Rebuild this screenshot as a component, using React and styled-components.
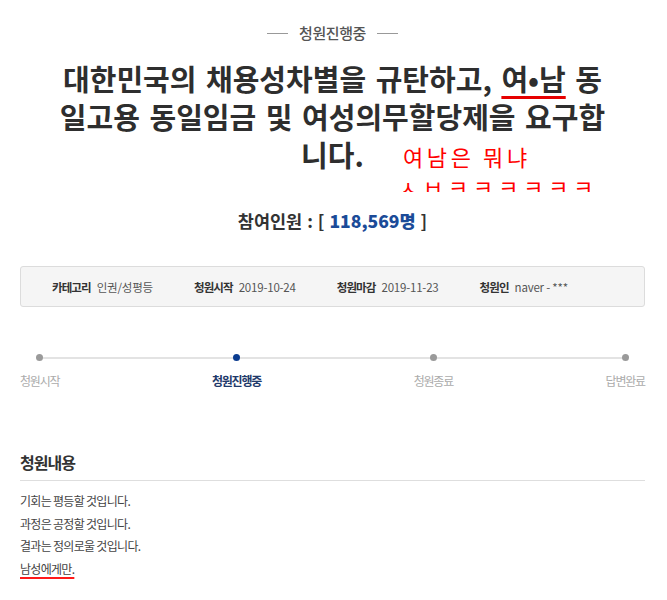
import React from 'react';
import styled, {createGlobalStyle} from 'styled-components';

const GlobalStyle = createGlobalStyle`
    body {
        margin: 0;
        background: #fff;
        font-family: "Noto Sans CJK KR", "Noto Sans", sans-serif;
        color: #333;
    }
`;

const Page = styled.div`
    width: 625px;
    margin-left: 20px;
    padding-top: 23px;
    padding-bottom: 20px;
`;

const Status = styled.div`
    display: flex;
    justify-content: center;
    align-items: center;
    gap: 11px;
    font-size: 15px;
    line-height: 20px;
    font-weight: 500;
    letter-spacing: -0.4px;
    color: #555;
    &::before, &::after {
        content: '';
        width: 21px;
        height: 1px;
        background: #999;
    }
`;

const TitleWrap = styled.div`
    position: relative;
    margin-top: 16px;
`;

const Title = styled.h1`
    margin: 0;
    text-align: center;
    font-size: 29px;
    line-height: 38px;
    font-weight: 700;
    letter-spacing: 0;
    word-spacing: 3px;
    color: #2e2e2e;
`;

const Marked = styled.span`
    text-decoration: underline;
    text-decoration-color: #e60000;
    text-decoration-thickness: 3px;
    text-underline-offset: 5px;
`;

// red scribble laid over the screenshot
const Note = styled.div`
    position: absolute;
    left: 383px;
    top: 82px;
    height: 51px;
    overflow: hidden;
    color: #ff0000;
    font-size: 22px;
    line-height: 30px;
    letter-spacing: 3.6px;
    font-weight: 400;
    white-space: nowrap;
    & span {
        letter-spacing: 4.8px;
        margin-left: -5px;
    }
`;

const Count = styled.div`
    margin-top: 36px;
    text-align: center;
    font-size: 17.5px;
    line-height: 24px;
    font-weight: 700;
    letter-spacing: 0;
    word-spacing: 1px;
    color: #333;
    & strong {
        color: #1b4b98;
    }
`;

const InfoBox = styled.div`
    margin-top: 33px;
    height: 39px;
    display: flex;
    align-items: center;
    gap: 41px;
    padding-left: 31px;
    background: #f5f5f5;
    border: 1px solid #dcdcdc;
    border-radius: 3px;
`;

const InfoItem = styled.div`
    display: flex;
    align-items: center;
    gap: 6px;
    font-size: 11.5px;
    line-height: 16px;
`;

const InfoLabel = styled.span`
    font-weight: 700;
    letter-spacing: -0.9px;
    color: #333;
`;

const InfoValue = styled.span`
    letter-spacing: -0.2px;
    color: #555;
`;

const Stepper = styled.div`
    position: relative;
    margin-top: 47px;
    display: flex;
    justify-content: space-between;
    &::before {
        content: '';
        position: absolute;
        left: 20px;
        right: 21px;
        top: 2.5px;
        height: 2px;
        background: #e3e3e3;
    }
`;

const Step = styled.div`
    position: relative;
    display: flex;
    flex-direction: column;
    align-items: center;
    gap: 12px;
`;

const Dot = styled.span`
    width: 7px;
    height: 7px;
    border-radius: 50%;
    background: ${p => p.$active ? '#0b3c8f' : '#9a9a9a'};
`;

const StepLabel = styled.span`
    font-size: 12px;
    line-height: 16px;
    letter-spacing: -1.2px;
    font-weight: ${p => p.$active ? 700 : 400};
    color: ${p => p.$active ? '#1f3a6a' : '#ababab'};
`;

const Section = styled.section`
    margin-top: 62px;
`;

const SectionTitle = styled.h2`
    margin: 0;
    padding-bottom: 7px;
    border-bottom: 1px solid #dedede;
    font-size: 16px;
    line-height: 22px;
    font-weight: 700;
    letter-spacing: -1px;
    color: #333;
`;

const Body = styled.div`
    margin-top: 9px;
    font-size: 12px;
    line-height: 22.5px;
    letter-spacing: -0.7px;
    color: #444;
    & p {
        margin: 0;
    }
`;

const Underlined = styled.span`
    text-decoration: underline;
    text-decoration-color: #ff1a1a;
    text-decoration-thickness: 2px;
    text-underline-offset: 3px;
`;

const steps = [
    {label: '청원시작'},
    {label: '청원진행중', active: true},
    {label: '청원종료'},
    {label: '답변완료'},
];

const info = [
    ['카테고리', '인권/성평등'],
    ['청원시작', '2019-10-24'],
    ['청원마감', '2019-11-23'],
    ['청원인', 'naver - ***'],
];

export default function App() {
    return (
        <>
            <GlobalStyle />
            <Page>
                <Status>청원진행중</Status>
                <TitleWrap>
                    <Title>
                        대한민국의 채용성차별을 규탄하고, <Marked>여•남</Marked> 동<br />
                        일고용 동일임금 및 여성의무할당제을 요구합<br />
                        니다.
                    </Title>
                    <Note>
                        여남은 뭐냐<br />
                        <span>ㅅㅂㅋㅋㅋㅋㅋㅋ</span>
                    </Note>
                </TitleWrap>
                <Count>
                    참여인원 : [ <strong>118,569명</strong> ]
                </Count>
                <InfoBox>
                    {info.map(([label, value]) => (
                        <InfoItem key={label}>
                            <InfoLabel>{label}</InfoLabel>
                            <InfoValue>{value}</InfoValue>
                        </InfoItem>
                    ))}
                </InfoBox>
                <Stepper>
                    {steps.map(s => (
                        <Step key={s.label}>
                            <Dot $active={s.active} />
                            <StepLabel $active={s.active}>{s.label}</StepLabel>
                        </Step>
                    ))}
                </Stepper>
                <Section>
                    <SectionTitle>청원내용</SectionTitle>
                    <Body>
                        <p>기회는 평등할 것입니다.</p>
                        <p>과정은 공정할 것입니다.</p>
                        <p>결과는 정의로울 것입니다.</p>
                        <p><Underlined>남성에게만.</Underlined></p>
                    </Body>
                </Section>
            </Page>
        </>
    );
}
